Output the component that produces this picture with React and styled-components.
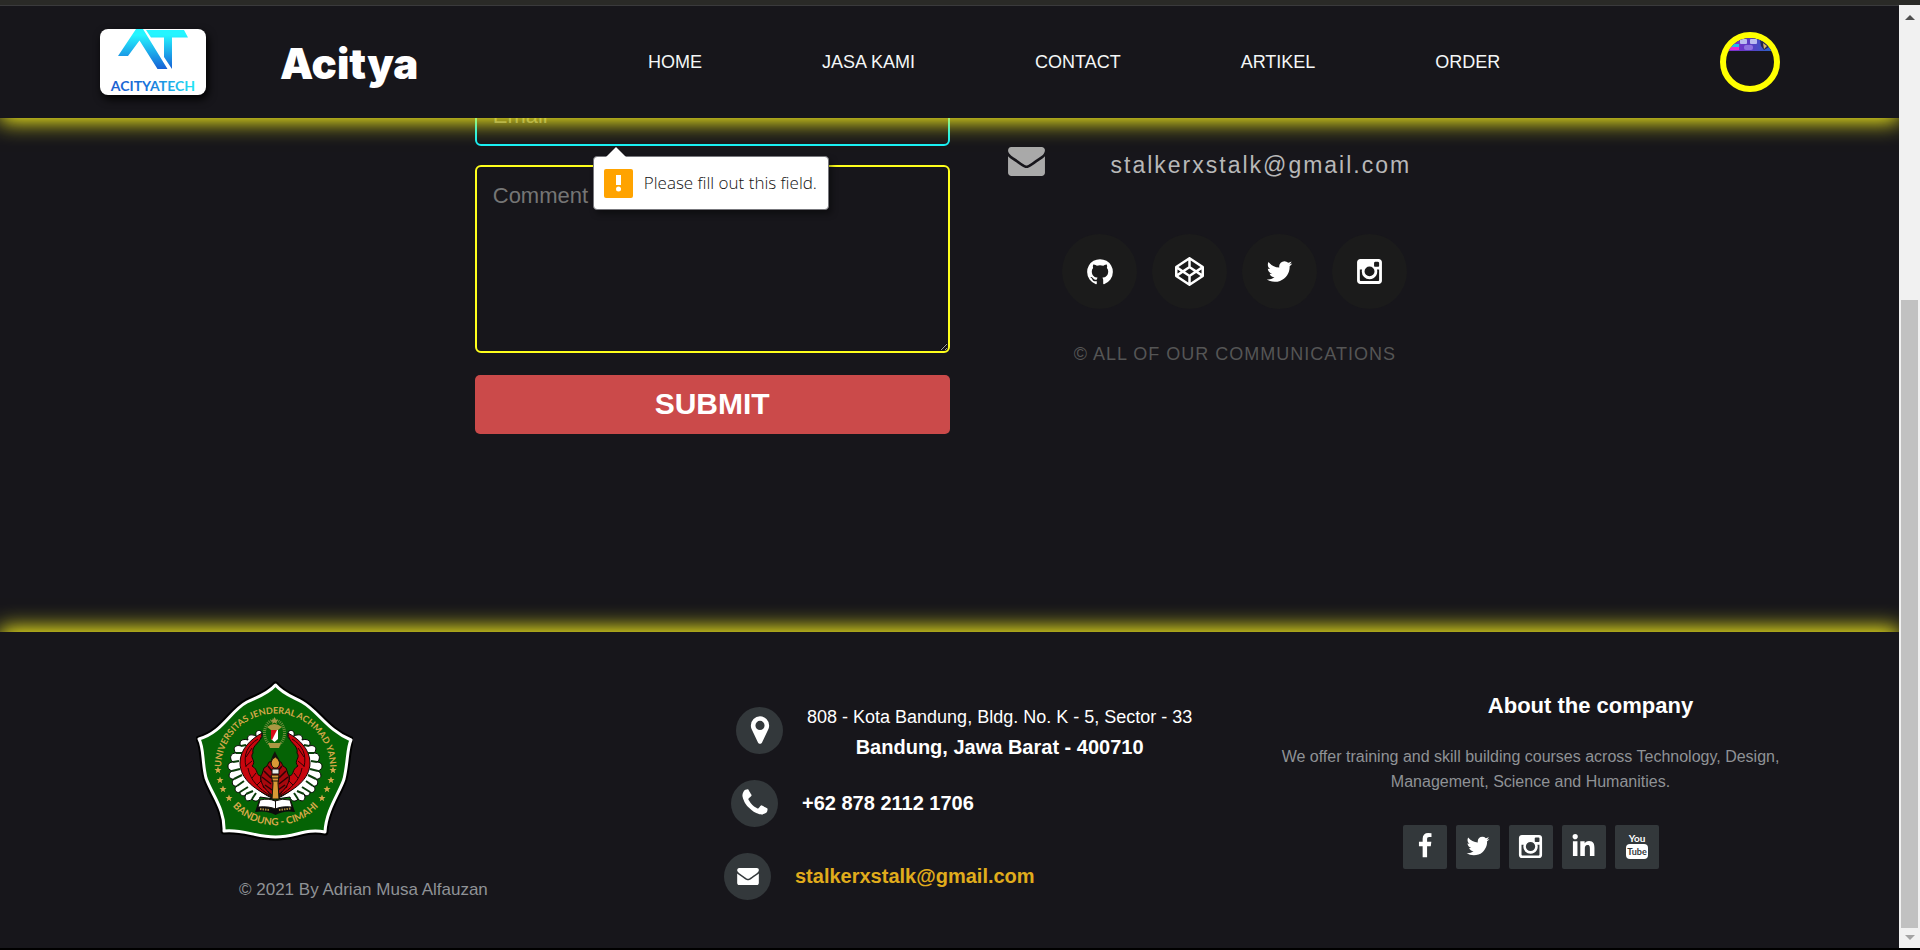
import React from 'react';
import styled, { createGlobalStyle, css } from 'styled-components';
import { FaCodepen, FaLinkedinIn } from 'react-icons/fa';

const ink = '#17161b';
const glow = '#fff81c';
const sans = '"Liberation Sans", Arial, sans-serif';

const GlobalStyle = createGlobalStyle`
  *, *::before, *::after { box-sizing: border-box; }
  body { margin: 0; background: ${ink}; font-family: ${sans}; color: #fff; }
  p, h1, h2, ul { margin: 0; padding: 0; }
  ul { list-style: none; }
  a { color: inherit; text-decoration: none; }
  svg { display: block; }
`;

const Shell = styled.div`
  display: grid;
  grid-template-columns: minmax(0, 1fr) 21px;
  min-height: 100vh;
  border-top: 5px solid #2a2a27;
  border-bottom: 2px solid #000;
`;

const Page = styled.div`
  display: flex;
  flex-direction: column;
  overflow: hidden;
  border-top: 1px solid #3a3a3c;
`;

/* ---------- Scrollbar ---------- */

const ScrollTrack = styled.div`
  display: flex;
  flex-direction: column;
  align-items: center;
  padding: 10px 2px 8px;
  background: #f1f1f1;
`;

const ScrollSpace = styled.div`
  flex: 280;
`;

const ScrollThumb = styled.div`
  flex: 627;
  width: 17px;
  margin-bottom: 7px;
  background: #c1c1c1;
`;

const ScrollArrow = styled.span`
  border: 5px solid transparent;
  ${({ $up }) =>
    $up
      ? css`border-top: 0; border-bottom-color: #505050;`
      : css`border-bottom: 0; border-top-color: #a3a3a3;`}
`;

/* ---------- Header ---------- */

const Header = styled.header`
  position: relative;
  z-index: 2;
  display: flex;
  align-items: center;
  justify-content: space-between;
  height: 112px;
  flex: none;
  padding: 0 119px 0 100px;
  background: ${ink};
  box-shadow: 0 4px 20px ${glow};
`;

const Brand = styled.a`
  display: flex;
  align-items: center;
  gap: 74px;
`;

const LogoCard = styled.span`
  width: 106px;
  height: 66px;
  border-radius: 8px;
  background: #fff;
  overflow: hidden;
  box-shadow: 2px 4px 8px #000;
`;

const BrandName = styled.h1`
  padding-top: 4px;
  font: 900 42px/48px Inter, ${sans};
`;

const Nav = styled.nav`
  display: flex;
  gap: 120px;
  margin-left: 10px;
`;

const NavLink = styled.a`
  font-size: 18px;
  line-height: 24px;
  font-weight: 500;
  color: #f4f6f7;
`;

const Avatar = styled.a`
  width: 60px;
  height: 60px;
  border: 6px solid yellow;
  border-radius: 50%;
  overflow: hidden;
`;

/* ---------- Contact section ---------- */

const Main = styled.main`
  display: flex;
  flex: 1;
  gap: 48px;
  margin-top: -33px;
  padding: 0 0 197px 25%;
`;

const Form = styled.form`
  display: flex;
  flex-direction: column;
  width: calc(100% / 3);
`;

const Field = styled.div`
  position: relative;
  margin-bottom: 19px;
`;

const fieldStyle = css`
  display: block;
  width: 100%;
  padding: 16px;
  border: 2px solid ${({ $color }) => $color};
  border-radius: 6px;
  background: transparent;
  color: #fff;
  font: 22px/25px ${sans};
  outline: none;
  &::placeholder { color: #757575; opacity: 1; }
`;

const Input = styled.input`
  ${fieldStyle}
  height: 61px;
`;

const TextArea = styled.textarea`
  ${fieldStyle}
  height: 188px;
  resize: vertical;
`;

const Submit = styled.button`
  height: 59px;
  margin-top: 3px;
  padding: 0 0 2px;
  border: 0;
  border-radius: 5px;
  background: #cb4a4a;
  color: #fff;
  font: bold 30px/36px ${sans};
  cursor: pointer;
`;

const Tip = styled.div`
  position: absolute;
  z-index: 3;
  top: 71px;
  left: 118px;
  display: flex;
  align-items: center;
  gap: 11px;
  height: 54px;
  padding: 0 11px 0 10px;
  border: 1px solid #77777c;
  border-radius: 4px;
  background: #fff;
  color: #111;
  font: 300 17px/22px "Open Sans", "Noto Sans", sans-serif;
  white-space: nowrap;
  box-shadow: 3px 4px 6px rgba(0, 0, 0, 0.4);

  &::before {
    content: '';
    position: absolute;
    top: -10px;
    left: 12px;
    border: 10px solid transparent;
    border-top: 0;
    border-bottom-color: #fff;
  }
`;

const TipIcon = styled.span`
  width: 29px;
  height: 29px;
  border-radius: 2px;
  background: #ffa300;
`;

const Contact = styled.section`
  display: flex;
  flex-direction: column;
  align-items: center;
  width: calc(100% / 3);
  padding-top: 62px;
`;

const MailRow = styled.a`
  display: flex;
  align-self: stretch;
  gap: 66px;
  padding-left: 10px;
  color: #a9a9a9;
`;

const MailText = styled.span`
  padding-top: 4px;
  font-size: 23px;
  line-height: 28px;
  letter-spacing: 2px;
  color: #b8b8b8;
`;

const RoundLinks = styled.ul`
  display: flex;
  gap: 15px;
  margin: 55px 0 33px;
`;

const RoundLink = styled.a`
  display: grid;
  place-items: center;
  width: 75px;
  height: 75px;
  border-radius: 50%;
  background: #1b1b1b;
  color: #fff;
`;

const Notice = styled.p`
  font-size: 18px;
  line-height: 24px;
  letter-spacing: 1px;
  color: #555;
`;

/* ---------- Footer ---------- */

const Footer = styled.footer`
  display: grid;
  grid-template-columns: 528fr 555fr 503fr;
  flex: none;
  padding: 48px 117px 46px 196px;
  background: ${ink};
  box-shadow: 0 -4px 20px ${glow};
`;

const Campus = styled.div`
  display: flex;
  flex-direction: column;
  align-items: flex-start;
`;

const Copyright = styled.p`
  margin-top: 36px;
  padding-left: 43px;
  font-size: 17px;
  line-height: 24px;
  color: #8f9296;
`;

const ContactList = styled.ul`
  display: flex;
  flex-direction: column;
  gap: 25px;
  padding-top: 26px;
`;

const ContactRow = styled.li`
  display: flex;
  align-items: center;
  gap: 24px;
  height: 48px;
  padding-left: ${({ $indent }) => $indent}px;
`;

const Disc = styled.span`
  display: grid;
  place-items: center;
  flex: none;
  width: 47px;
  height: 47px;
  border-radius: 50%;
  background: #33383b;
`;

const Address = styled.p`
  padding-top: 4px;
  font-size: 18px;
  line-height: 30px;
  text-align: center;
`;

const Strong = styled.strong`
  display: block;
  font-size: 20px;
`;

const StrongLink = styled.a`
  font-size: 20px;
  line-height: 24px;
  font-weight: bold;
  color: ${({ $gold }) => ($gold ? '#e0ac1c' : '#fff')};
`;

const Company = styled.div`
  display: flex;
  flex-direction: column;
  align-items: center;
  padding-top: 12px;
`;

const CompanyTitle = styled.h2`
  padding-left: 120px;
  font-size: 22px;
  line-height: 28px;
`;

const CompanyText = styled.p`
  margin: 24px 0 31px;
  font-size: 16px;
  line-height: 25px;
  text-align: center;
  color: #8f9296;
`;

const SquareLinks = styled.ul`
  display: flex;
  gap: 9px;
`;

const SquareLink = styled.a`
  display: grid;
  place-items: center;
  width: 44px;
  height: 44px;
  padding-bottom: 2px;
  border-radius: 2px;
  background: #33383b;
  color: #fff;
`;

/* ---------- Icons ---------- */

const glyphs = {
  envelope:
    'M1792 710v794q0 66-47 113t-113 47h-1472q-66 0-113-47t-47-113v-794q44 49 101 87 362 246 497 345 57 42 92.500 65.500t94.500 48 110 24.500h2q51 0 110-24.500t94.500-48 92.500-65.500q170-123 498-345 57-39 100-87zm0-294q0 79-49 151t-122 123q-376 261-468 325-10 7-42.500 31t-54 38.500-52 32.500-57.500 27-50 9h-2q-23 0-50-9t-57.500-27-52-32.500-54-38.500-42.500-31q-91-64-262-182.500t-205-142.500q-62-42-117-115.500t-55-136.500q0-78 41.500-130t118.500-52h1472q65 0 112.500 47t47.500 113z',
  github:
    'M896 128q209 0 385.500 103t279.500 279.500 103 385.500q0 251-146.500 451.500t-378.500 277.500q-27 5-40-7t-13-30q0-3 .5-76.500t.5-134.500q0-97-52-142 57-6 102.500-18t94-39 81-66.500 53-105 20.500-150.500q0-119-79-206 37-91-8-204-28-9-81 11t-92 44l-38 24q-93-26-192-26t-192 26q-16-11-42.500-27t-83.500-38.500-85-13.500q-45 113-8 204-79 87-79 206 0 85 20.500 150t52.500 105 80.500 67 94 39 102.500 18q-39 36-49 103-21 10-45 15t-57 5-65.500-21.500-55.500-62.500q-19-32-48.500-52t-49.500-24l-20-3q-21 0-29 4.500t-5 11.500 9 14 13 12l7 5q22 10 43.500 38t31.500 51l10 23q13 38 44 61.500t67 30 69.500 7 55.500-3.500l23-4q0 38 .5 88.500t.5 54.500q0 18-13 30t-40 7q-232-77-378.500-277.500t-146.500-451.500q0-209 103-385.500t279.500-279.500 385.500-103z',
  twitter:
    'M1684 408q-67 98-162 167 1 14 1 42 0 130-38 259.500t-115.500 248.500-184.500 210.500-258 146-323 54.500q-271 0-496-145 35 4 78 4 225 0 401-138-105-2-188-64.500t-114-159.500q33 5 61 5 43 0 85-11-112-23-185.500-111.500t-73.500-205.500v-4q68 38 146 41-66-44-105-115t-39-154q0-88 44-163 121 149 294.500 238.500t371.500 99.500q-8-38-8-74 0-134 94.500-228.500t228.500-94.500q140 0 236 102 109-21 205-78-37 115-142 178 93-10 186-50z',
  instagram:
    'M1490 1426v-648h-135q20 63 20 131 0 126-64 232.500t-174 168.500-240 62q-197 0-337-135.500t-140-327.500q0-68 20-131h-141v648q0 26 17.500 43.500t43.500 17.500h1069q25 0 43-17.500t18-43.500zm-284-533q0-124-90.500-211.500t-218.500-87.500q-127 0-217.500 87.500t-90.500 211.500 90.500 211.500 217.500 87.500q128 0 218.500-87.500t90.500-211.500zm284-360v-165q0-28-20-48.500t-49-20.500h-174q-29 0-49 20.500t-20 48.500v165q0 29 20 49t49 20h174q29 0 49-20t20-49zm174-208v1142q0 81-58 139t-139 58h-1142q-81 0-139-58t-58-139v-1142q0-81 58-139t139-58h1142q81 0 139 58t58 139z',
  facebook:
    'M1343 12v264h-157q-86 0-116 36t-30 108v189h293l-39 296h-254v759h-306v-759h-255v-296h255v-218q0-186 104-288.500t277-102.500q147 0 228 12z',
  marker:
    'M1152 640q0-106-75-181t-181-75-181 75-75 181 75 181 181 75 181-75 75-181zm256 0q0 109-33 179l-364 774q-16 33-47.500 52t-67.500 19-67.500-19-46.500-52l-365-774q-33-70-33-179 0-212 150-362t362-150 362 150 150 362z',
  phone:
    'M1600 1240q0 27-10 70.500t-21 68.500q-21 50-122 106-94 51-186 51-27 0-53-3.500t-57.500-12.500-47-14.500-55.500-20.500-49-18q-98-35-175-83-127-79-264-216t-216-264q-48-77-83-175-3-9-18-49t-20.500-55.500-14.500-47-12.500-57.500-3.500-53q0-92 51-186 56-101 106-122 25-11 68.500-21t70.500-10q14 0 21 3 18 6 53 76 11 19 30 54t35 63.500 31 53.500q3 4 17.500 25t21.500 35.500 7 28.500q0 20-28.500 50t-62 55-62 53-28.500 46q0 9 5 22.500t8.500 20.500 14 24 11.500 19q76 137 174 235t235 174q2 1 19 11.500t24 14 20.500 8.500 22.500 5q18 0 46-28.500t53-62 55-62 50-28.500q14 0 28.500 7t35.500 21.500 25 17.500q25 15 53.500 31t63.500 35 54 30q70 35 76 53 3 7 3 21z',
};

function Icon({ name, size }) {
  const box = name === 'envelope' ? '0 256 1792 1408' : '0 0 1792 1792';
  const height = name === 'envelope' ? Math.round((size * 1408) / 1792) : size;
  return (
    <svg width={size} height={height} viewBox={box} fill="currentColor" aria-hidden="true">
      <path d={glyphs[name]} />
    </svg>
  );
}

function YouTubeIcon() {
  return (
    <svg width="24" height="28" viewBox="0 0 24 28" aria-hidden="true">
      <text x="12" y="10" fontFamily="Lato" fontSize="10" fontWeight="700" textAnchor="middle" fill="#fff">You</text>
      <rect x="1" y="12" width="22" height="15" rx="4" fill="#fff" />
      <text x="12" y="23" fontFamily="Lato" fontSize="9" fontWeight="700" textAnchor="middle" fill="#33383b">Tube</text>
    </svg>
  );
}

function LogoMark() {
  return (
    <svg width="106" height="66" viewBox="0 0 106 66" role="img" aria-label="Acitya Tech">
      <defs>
        <linearGradient id="markFill" gradientUnits="userSpaceOnUse" x1="0" y1="0" x2="0" y2="40">
          <stop offset="0.15" stopColor="#25f5ff" />
          <stop offset="1" stopColor="#1560d6" />
        </linearGradient>
        <linearGradient id="nameFill" x1="0" x2="1" y1="0" y2="0">
          <stop offset="0" stopColor="#1a5fd0" />
          <stop offset="0.45" stopColor="#1874dc" />
          <stop offset="1" stopColor="#22e6f5" />
        </linearGradient>
      </defs>
      <g fill="url(#markFill)">
        <path d="M18 27L36 0H43L67.500 40H57.500L39.500 11.500L28 27Z" />
        <path d="M46 1H84L88 8.500H72V40L64 28V8.500H51Z" />
      </g>
      <text x="53" y="62" fontFamily="Lato" fontSize="14" fontWeight="700" textAnchor="middle" fill="url(#nameFill)">
        ACITYATECH
      </text>
    </svg>
  );
}

function AvatarPicture() {
  return (
    <svg width="48" height="48" viewBox="0 0 48 48" role="img" aria-label="Profile">
      <defs>
        <linearGradient id="banner" x1="0" x2="1" y1="0" y2="0">
          <stop offset="0" stopColor="#8a2fd0" />
          <stop offset="0.5" stopColor="#5b3ec4" />
          <stop offset="1" stopColor="#2468c8" />
        </linearGradient>
      </defs>
      <rect width="48" height="13" fill="url(#banner)" />
      <rect x="5" y="6" width="8" height="3" fill="#22b8ee" />
      <rect x="3" y="9" width="10" height="3" fill="#e627d2" />
      <rect x="14" y="1" width="7" height="5" rx="1" fill="#b9bdf0" />
      <rect x="24" y="1" width="7" height="5" rx="1" fill="#b9bdf0" />
      <rect x="18" y="7" width="9" height="5" rx="2" fill="#8d72e0" />
      <path d="M34 2l5 1 4 6-5 3-3-4z" fill="#23264a" />
      <path d="M37 5l4 3-3 3z" fill="#d9b56a" />
    </svg>
  );
}

const stars = [
  [38, 100], [40, 110], [43, 119], [49, 128],
  [153, 100], [151, 110], [147, 119], [142, 128],
];

const shield =
  'M95.500 15C103 24 113 27 122 32C138 41 147 60 171 70C167 78 168 92 164 109C160 122 146 140 145 162C126 158 116 167 95.500 167C74 167 64 159 44 161C45 139 32 125 26 108C22 92 24 78 19 69C43 62 50 41 67 32C77 27 88 24 95.500 15Z';

function Wing() {
  return (
    <g>
      <path
        d="M81 61C77 59 74 63 77 67C72 63 66 65 68 70C62 68 58 72 61 76C55 74 52 79 56 83C50 83 49 89 53 92C47 92 46 99 52 101C47 104 49 110 54 109C51 112 52 117 57 116C53 119 56 124 60 122C60 126 64 127 66 124C63 130 68 133 72 129C74 132 79 132 80 127L94 129C77 122 64 108 63 94C62 81 67 74 79 70C83 68 83 64 81 61Z"
        fill="#fff"
        stroke="#050705"
        strokeWidth="1"
      />
      <path
        d="M82 63C82 73 71 75 73 83C69 88 77 91 72 96C79 100 75 105 81 106C79 111 85 114 83 117C89 119 87 124 94 128C76 121 60 109 60 93C60 79 71 69 82 63Z"
        fill="#c8060e"
        stroke="#170304"
        strokeWidth="1"
      />
      <path d="M78 69C68 75 63 84 66 97M72 78L66 87M72 91L66 96M68 98C70 110 79 119 91 126M76 103L72 108M81 111L77 115" fill="none" stroke="#2c0305" strokeWidth="1" />
      <path d="M61 76L66 75M56 83L62 83M53 92L59 91M52 101L60 99M54 109L62 105M57 116L64 111M60 122L68 117M66 124L73 121M72 129L76 123" stroke="#0b3d0b" strokeWidth="2" />
    </g>
  );
}

function Emblem() {
  return (
    <svg width="157" height="162" viewBox="16 10 157 162" role="img" aria-label="Universitas Jenderal Achmad Yani">
      <defs>
        <path id="arcTop" d="M41 98A54.500 54.500 0 0 1 150 98" />
        <path id="arcBottom" d="M44 124A58 58 0 0 0 147 124" />
      </defs>
      <path d={shield} fill="#000" stroke="#000" strokeWidth="7" strokeLinejoin="round" />
      <path d={shield} fill="#056305" stroke="#fff" strokeWidth="3" strokeLinejoin="round" />
      <g fill="#d6a94a" fontFamily="Lato" fontWeight="700" textAnchor="middle">
        <text fontSize="9">
          <textPath href="#arcTop" startOffset="50%">UNIVERSITAS JENDERAL ACHMAD YANI</textPath>
        </text>
        <text fontSize="10">
          <textPath href="#arcBottom" startOffset="50%">BANDUNG - CIMAHI</textPath>
        </text>
      </g>
      {stars.map(([x, y]) => (
        <path
          key={`${x}-${y}`}
          transform={`translate(${x} ${y})`}
          d="M0-3.500L1-1L3.500-1L1.500.800L2.200 3.300L0 1.800L-2.200 3.300L-1.500.800L-3.500-1L-1-1Z"
          fill="#d6a94a"
        />
      ))}
      <Wing />
      <g transform="translate(190 0) scale(-1 1)">
        <Wing />
      </g>
      <path d="M95 127C85 121 78 111 82 104L84 98L87 96L89 92L95 91L101 92L103 96L106 98L108 104C112 111 105 121 95 127Z" fill="#a8080d" stroke="#170304" strokeWidth="1" />
      <path d="M84 101L91 108M82 107L91 114M85 115L92 120M88 96L92 101M106 101L99 108M108 107L99 114M105 115L98 120M102 96L98 101" stroke="#2c0305" strokeWidth="1.500" />
      <ellipse cx="94.500" cy="63" rx="10" ry="13" fill="none" stroke="#6f8c3c" strokeWidth="3" strokeDasharray="1 1" />
      <path d="M94.500 47L96 50H98L96.500 52L97 54L94.500 52.500L92 54L92.500 52L91 50H93Z" fill="#a99843" />
      <path d="M87 57Q94 51 102 57L98 60H91ZM88 73H101L99 78H90Z" fill="#a99843" />
      <path d="M91 60H98V69L94.500 72L91 69Z" fill="#fff" />
      <path d="M91 60H97L92 70L91 69Z" fill="#d80d17" />
      <path d="M95 81C92 87 90 90 91 95L95 99L100 95C101 90 97 87 95 81Z" fill="#14110b" />
      <path d="M95.500 87C90 90 90 95 94 98H97C101 95 100 90 95.500 87Z" fill="#d99a35" stroke="#14110b" />
      <path d="M92 99H99V104H92Z" fill="#e9e9e9" stroke="#14110b" />
      <path d="M91 105H99L98 113L99 129H92L93 113Z" fill="#d99a35" stroke="#14110b" />
      <path d="M91 108H99M91 111H99" stroke="#14110b" />
      <path d="M79 130L75 142Q87 140 95.500 145Q104 140 115 142L111 130Z" fill="#0c0c0c" />
      <path d="M80 130Q89 128 95 131Q102 128 110 130L112 137Q101 136 95.500 139Q89 136 78 137Z" fill="#fff" stroke="#14110b" />
      <path d="M95.500 131V139" stroke="#14110b" />
      <path d="M80 139L90 140M99 140L111 138.500" stroke="#a98a3c" strokeWidth="2" strokeDasharray="1.500 1" />
    </svg>
  );
}

/* ---------- Page ---------- */

const navItems = ['HOME', 'JASA KAMI', 'CONTACT', 'ARTIKEL', 'ORDER'];

const communityLinks = [
  ['GitHub', <Icon name="github" size={30} />],
  ['CodePen', <FaCodepen size={29} />],
  ['Twitter', <Icon name="twitter" size={29} />],
  ['Instagram', <Icon name="instagram" size={29} />],
];

const companyLinks = [
  ['Facebook', <Icon name="facebook" size={26} />],
  ['Twitter', <Icon name="twitter" size={26} />],
  ['Instagram', <Icon name="instagram" size={27} />],
  ['LinkedIn', <FaLinkedinIn size={25} />],
  ['YouTube', <YouTubeIcon />],
];

export default function App() {
  return (
    <>
      <GlobalStyle />
      <Shell>
        <Page>
          <Header>
            <Brand href="#">
              <LogoCard><LogoMark /></LogoCard>
              <BrandName>Acitya</BrandName>
            </Brand>
            <Nav>
              {navItems.map((item) => (
                <NavLink key={item} href="#">{item}</NavLink>
              ))}
            </Nav>
            <Avatar href="#"><AvatarPicture /></Avatar>
          </Header>

          <Main>
            <Form onSubmit={(event) => event.preventDefault()} noValidate>
              <Field>
                <Input $color="#18eff5" type="email" placeholder="Email" aria-label="Email" aria-describedby="email-tip" />
                <Tip id="email-tip" role="alert">
                  <TipIcon>
                    <svg width="29" height="29" viewBox="0 0 29 29" fill="#fff" aria-hidden="true">
                      <path d="M12 6H17V16H12Z" />
                      <circle cx="14.500" cy="20" r="2.500" />
                    </svg>
                  </TipIcon>
                  Please fill out this field.
                </Tip>
              </Field>
              <Field>
                <TextArea $color="#ffff1c" placeholder="Comment" aria-label="Comment" />
              </Field>
              <Submit type="submit">SUBMIT</Submit>
            </Form>

            <Contact>
              <MailRow href="#">
                <Icon name="envelope" size={37} />
                <MailText>stalkerxstalk@gmail.com</MailText>
              </MailRow>
              <RoundLinks>
                {communityLinks.map(([label, icon]) => (
                  <li key={label}><RoundLink href="#" aria-label={label}>{icon}</RoundLink></li>
                ))}
              </RoundLinks>
              <Notice>© ALL OF OUR COMMUNICATIONS</Notice>
            </Contact>
          </Main>

          <Footer>
            <Campus>
              <Emblem />
              <Copyright>© 2021 By Adrian Musa Alfauzan</Copyright>
            </Campus>

            <ContactList>
              <ContactRow $indent={12}>
                <Disc><Icon name="marker" size={32} /></Disc>
                <Address>
                  808 - Kota Bandung, Bldg. No. K - 5, Sector - 33
                  <Strong>Bandung, Jawa Barat - 400710</Strong>
                </Address>
              </ContactRow>
              <ContactRow $indent={7}>
                <Disc><Icon name="phone" size={32} /></Disc>
                <StrongLink href="#">+62 878 2112 1706</StrongLink>
              </ContactRow>
              <ContactRow $indent={0}>
                <Disc><Icon name="envelope" size={22} /></Disc>
                <StrongLink href="#" $gold>stalkerxstalk@gmail.com</StrongLink>
              </ContactRow>
            </ContactList>

            <Company>
              <CompanyTitle>About the company</CompanyTitle>
              <CompanyText>
                We offer training and skill building courses across Technology, Design, Management, Science and
                Humanities.
              </CompanyText>
              <SquareLinks>
                {companyLinks.map(([label, icon]) => (
                  <li key={label}><SquareLink href="#" aria-label={label}>{icon}</SquareLink></li>
                ))}
              </SquareLinks>
            </Company>
          </Footer>
        </Page>

        <ScrollTrack aria-hidden="true">
          <ScrollArrow $up />
          <ScrollSpace />
          <ScrollThumb />
          <ScrollArrow />
        </ScrollTrack>
      </Shell>
    </>
  );
}
